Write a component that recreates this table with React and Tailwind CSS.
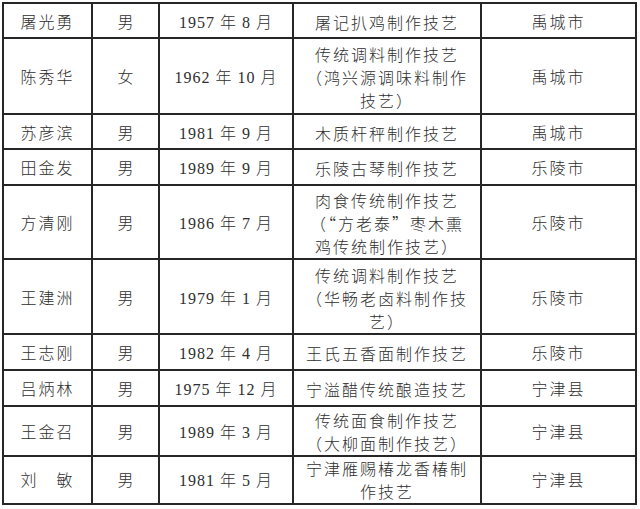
const rows = [
  { name: '屠光勇', sex: '男', date: ['1957', '8'], item: ['屠记扒鸡制作技艺'], area: '禹城市', h: 35 },
  { name: '陈秀华', sex: '女', date: ['1962', '10'], item: ['传统调料制作技艺', '（鸿兴源调味料制作', '技艺）'], area: '禹城市', h: 76 },
  { name: '苏彦滨', sex: '男', date: ['1981', '9'], item: ['木质杆秤制作技艺'], area: '禹城市', h: 35 },
  { name: '田金发', sex: '男', date: ['1989', '9'], item: ['乐陵古琴制作技艺'], area: '乐陵市', h: 36 },
  { name: '方清刚', sex: '男', date: ['1986', '7'], item: ['肉食传统制作技艺', '（“方老泰”枣木熏', '鸡传统制作技艺）'], area: '乐陵市', h: 74 },
  { name: '王建洲', sex: '男', date: ['1979', '1'], item: ['传统调料制作技艺', '（华畅老卤料制作技', '艺）'], area: '乐陵市', h: 75 },
  { name: '王志刚', sex: '男', date: ['1982', '4'], item: ['王氏五香面制作技艺'], area: '乐陵市', h: 36 },
  { name: '吕炳林', sex: '男', date: ['1975', '12'], item: ['宁溢醋传统酿造技艺'], area: '宁津县', h: 36 },
  { name: '王金召', sex: '男', date: ['1989', '3'], item: ['传统面食制作技艺', '（大柳面制作技艺）'], area: '宁津县', h: 50, pad: 'pt-[2px]' },
  { name: '刘　敏', sex: '男', date: ['1981', '5'], item: ['宁津雁赐椿龙香椿制', '作技艺'], area: '宁津县', h: 48, pad: 'pt-0' },
];

const cell = 'border-2 border-[#262626] px-0 pb-0 text-center align-middle';
const cjk = { fontFamily: '"Noto Sans CJK SC", sans-serif' };

export default function App() {
  return (
    <div className="w-[640px] h-[509px] bg-white overflow-hidden pt-[2px] pl-[2px]">
      <table
        className="table-fixed border-collapse w-[633px] text-[16px] leading-[23px] font-light text-[#2e2e2e]"
        style={{ fontFamily: '"Liberation Serif", "Noto Sans CJK SC", serif' }}
      >
        <colgroup>
          <col className="w-[89px]" />
          <col className="w-[67px]" />
          <col className="w-[134px]" />
          <col className="w-[188px]" />
          <col className="w-[155px]" />
        </colgroup>
        <tbody>
          {rows.map((r) => {
            const td = `${cell} ${r.pad || 'pt-[3px]'}`;
            return (
              <tr key={r.name} style={{ height: r.h }}>
                <td className={`${td} tracking-[2px]`}>{r.name}</td>
                <td className={td}>{r.sex}</td>
                <td className={`${td} tracking-[1px]`}>
                  {r.date[0]} 年 {r.date[1]} 月
                </td>
                <td className={`${td} tracking-[2px]`} style={cjk}>
                  {r.item.map((line, i) => (
                    <div key={i}>{line}</div>
                  ))}
                </td>
                <td className={`${td} tracking-[2px]`}>{r.area}</td>
              </tr>
            );
          })}
        </tbody>
      </table>
    </div>
  );
}
